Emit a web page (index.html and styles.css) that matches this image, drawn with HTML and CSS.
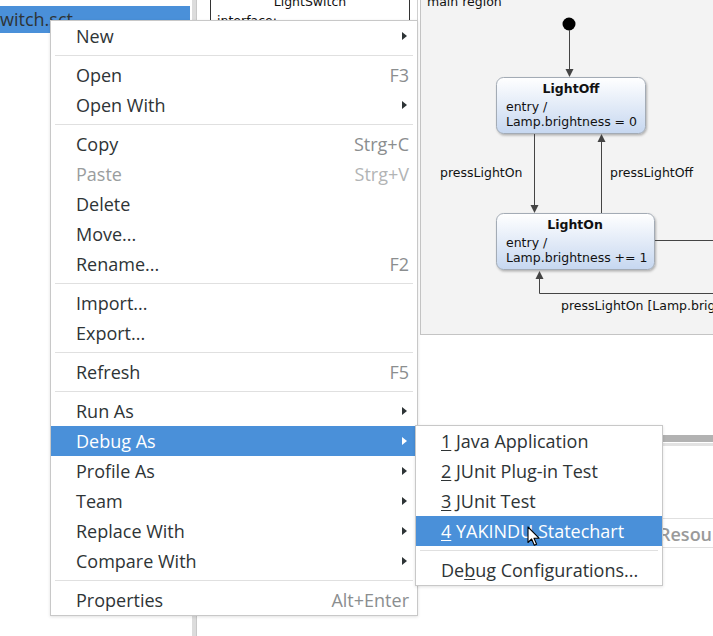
FILE: index.html
```html
<!DOCTYPE html>
<html>
<head>
<meta charset="utf-8">
<link rel="stylesheet" href="styles.css">
</head>
<body>
<div class="app">
  <div class="tree">
    <div class="row selected">witch.sct</div>
  </div>
  <div class="scrollstrip"></div>
  <div class="editor">
    <svg class="canvas" width="516" height="636" viewBox="197 0 516 636">
      <defs>
        <linearGradient id="stateGrad" x1="0" y1="0" x2="0" y2="1">
          <stop offset="0" stop-color="#ffffff"/>
          <stop offset="1" stop-color="#c6d7f0"/>
        </linearGradient>
        <filter id="shadow" x="-10%" y="-10%" width="130%" height="140%">
          <feDropShadow dx="1" dy="1.5" stdDeviation="1.2" flood-color="#000" flood-opacity="0.28"/>
        </filter>
      </defs>
      <!-- class box -->
      <rect x="210.5" y="-10" width="199" height="80" fill="#fff" stroke="#333"/>
      <text class="dtext" x="310" y="6" text-anchor="middle">LightSwitch</text>
      <text class="dtext" x="217" y="25">interface:</text>
      <!-- outer border -->
      <line x1="417.5" y1="0" x2="417.5" y2="615" stroke="#cfcfcf"/>
      <!-- region -->
      <rect x="420.5" y="-10" width="400" height="344.5" fill="#f3f3f3" stroke="#c4c4c4"/>
      <text class="dtext" x="427" y="6">main region</text>
      <!-- initial -->
      <circle cx="569" cy="24" r="6.5" fill="#000"/>
      <line x1="569.5" y1="30" x2="569.5" y2="70" stroke="#444"/>
      <path d="M565.5 69 L573.5 69 L569.5 77 Z" fill="#444"/>
      <!-- LightOff -->
      <rect x="496.5" y="77.5" width="149" height="56" rx="7" fill="url(#stateGrad)" stroke="#a3abb5" filter="url(#shadow)"/>
      <text class="dtext bold" x="571" y="93" text-anchor="middle">LightOff</text>
      <text class="dtext" x="506" y="111">entry /</text>
      <text class="dtext" x="506" y="126">Lamp.brightness = 0</text>
      <!-- pressLightOn down -->
      <line x1="534.5" y1="134" x2="534.5" y2="206" stroke="#444"/>
      <path d="M530.5 205 L538.5 205 L534.5 213 Z" fill="#444"/>
      <text class="dtext" x="440" y="177">pressLightOn</text>
      <!-- pressLightOff up -->
      <line x1="601.5" y1="141" x2="601.5" y2="213" stroke="#444"/>
      <path d="M597.5 142 L605.5 142 L601.5 134 Z" fill="#444"/>
      <text class="dtext" x="610" y="177">pressLightOff</text>
      <!-- LightOn -->
      <rect x="496.5" y="213.5" width="158" height="56" rx="7" fill="url(#stateGrad)" stroke="#a3abb5" filter="url(#shadow)"/>
      <text class="dtext bold" x="575" y="229" text-anchor="middle">LightOn</text>
      <text class="dtext" x="506" y="247">entry /</text>
      <text class="dtext" x="506" y="262">Lamp.brightness += 1</text>
      <line x1="655" y1="240.5" x2="713" y2="240.5" stroke="#444"/>
      <!-- self loop -->
      <polyline points="713,293.5 539.5,293.5 539.5,278" fill="none" stroke="#444"/>
      <path d="M535.5 279 L543.5 279 L539.5 271 Z" fill="#444"/>
      <text class="dtext" x="561" y="310">pressLightOn [Lamp.brightness &lt; 10]</text>
      <!-- lower pane -->
      <rect x="418" y="435" width="300" height="7" fill="#b2b2b2"/>
      <rect x="418" y="443" width="300" height="3" fill="#e2e2e2"/>
      <line x1="418" y1="518.5" x2="713" y2="518.5" stroke="#e0e0e0"/>
      <line x1="418" y1="547.5" x2="713" y2="547.5" stroke="#e0e0e0"/>
      <text class="tabtext" x="659" y="541">Resources</text>
    </svg>
  </div>
</div>

<div class="menu main-menu">
  <div class="item"><span>New</span><span class="arrow"></span></div>
  <div class="sep"></div>
  <div class="item"><span>Open</span><span class="key">F3</span></div>
  <div class="item"><span>Open With</span><span class="arrow"></span></div>
  <div class="sep"></div>
  <div class="item"><span>Copy</span><span class="key">Strg+C</span></div>
  <div class="item disabled"><span>Paste</span><span class="key">Strg+V</span></div>
  <div class="item"><span>Delete</span></div>
  <div class="item"><span>Move...</span></div>
  <div class="item"><span>Rename...</span><span class="key">F2</span></div>
  <div class="sep"></div>
  <div class="item"><span>Import...</span></div>
  <div class="item"><span>Export...</span></div>
  <div class="sep"></div>
  <div class="item"><span>Refresh</span><span class="key">F5</span></div>
  <div class="sep"></div>
  <div class="item"><span>Run As</span><span class="arrow"></span></div>
  <div class="item active"><span>Debug As</span><span class="arrow"></span></div>
  <div class="item"><span>Profile As</span><span class="arrow"></span></div>
  <div class="item"><span>Team</span><span class="arrow"></span></div>
  <div class="item"><span>Replace With</span><span class="arrow"></span></div>
  <div class="item"><span>Compare With</span><span class="arrow"></span></div>
  <div class="sep"></div>
  <div class="item"><span>Properties</span><span class="key">Alt+Enter</span></div>
</div>

<div class="menu sub-menu">
  <div class="item"><span><u>1</u> Java Application</span></div>
  <div class="item"><span><u>2</u> JUnit Plug-in Test</span></div>
  <div class="item"><span><u>3</u> JUnit Test</span></div>
  <div class="item active"><span><u>4</u> YAKINDU Statechart</span></div>
  <div class="sep"></div>
  <div class="item"><span>De<u>b</u>ug Configurations...</span></div>
</div>

<svg class="cursor" width="14" height="21" viewBox="0 0 14 21">
  <path d="M1 1 L1 16.5 L4.6 13 L7.3 19.2 L9.6 18.2 L7 12.2 L12 12.2 Z" fill="#fff" stroke="#000" stroke-width="1.1" stroke-linejoin="round"/>
</svg>
</body>
</html>
```
FILE: styles.css
```css
html, body {
  margin: 0;
  padding: 0;
}
body {
  width: 713px;
  height: 636px;
  overflow: hidden;
  background: #ffffff;
  position: relative;
  font-family: "Open Sans", "Noto Sans", sans-serif;
  color: #2e3436;
}
.app {
  display: flex;
  height: 636px;
}
.tree {
  width: 192px;
  flex: none;
  padding-top: 6px;
  box-sizing: border-box;
}
.row {
  height: 27px;
  width: 190px;
  font-size: 18px;
  line-height: 27px;
  white-space: nowrap;
  overflow: hidden;
  color: #2e3436;
}
.row.selected {
  background: #4a90d9;
}
.scrollstrip {
  width: 4px;
  flex: none;
  background: #dcdcdc;
  border-right: 1px solid #c8c8c8;
}
.editor {
  flex: 1;
  overflow: hidden;
}
.canvas {
  display: block;
}
.dtext {
  font-family: "DejaVu Sans", Verdana, sans-serif;
  font-size: 12.5px;
  fill: #111;
}
.dtext.bold {
  font-weight: bold;
}
.tabtext {
  font-family: "Open Sans", sans-serif;
  font-size: 18px;
  font-weight: 600;
  fill: #9a9a9a;
}
.menu {
  position: absolute;
  background: #ffffff;
  border: 1px solid #c8c8c8;
  box-sizing: border-box;
  box-shadow: 0 1px 3px rgba(0, 0, 0, 0.12);
  font-size: 18px;
}
.main-menu {
  left: 50px;
  top: 20px;
  width: 368px;
}
.sub-menu {
  left: 415px;
  top: 425px;
  width: 248px;
}
.item {
  height: 30px;
  display: flex;
  align-items: center;
  justify-content: space-between;
  padding: 0 8px 0 25px;
  white-space: nowrap;
  color: #2e3436;
}
.item.disabled {
  color: #9a9d9e;
}
.item.disabled .key {
  color: #b2b4b5;
}
.item.active {
  background: #4a90d9;
  color: #ffffff;
}
.key {
  color: #8b8e8f;
}
.arrow {
  width: 0;
  height: 0;
  border-left: 5px solid #2e3436;
  border-top: 4.5px solid transparent;
  border-bottom: 4.5px solid transparent;
  margin-right: 2px;
}
.item.active .arrow {
  border-left-color: #ffffff;
}
.sep {
  height: 1px;
  background: #e0e0e0;
  margin: 4px 4px;
}
u {
  text-decoration-thickness: 1px;
  text-underline-offset: 2px;
}
.cursor {
  position: absolute;
  left: 527px;
  top: 526px;
}
```
